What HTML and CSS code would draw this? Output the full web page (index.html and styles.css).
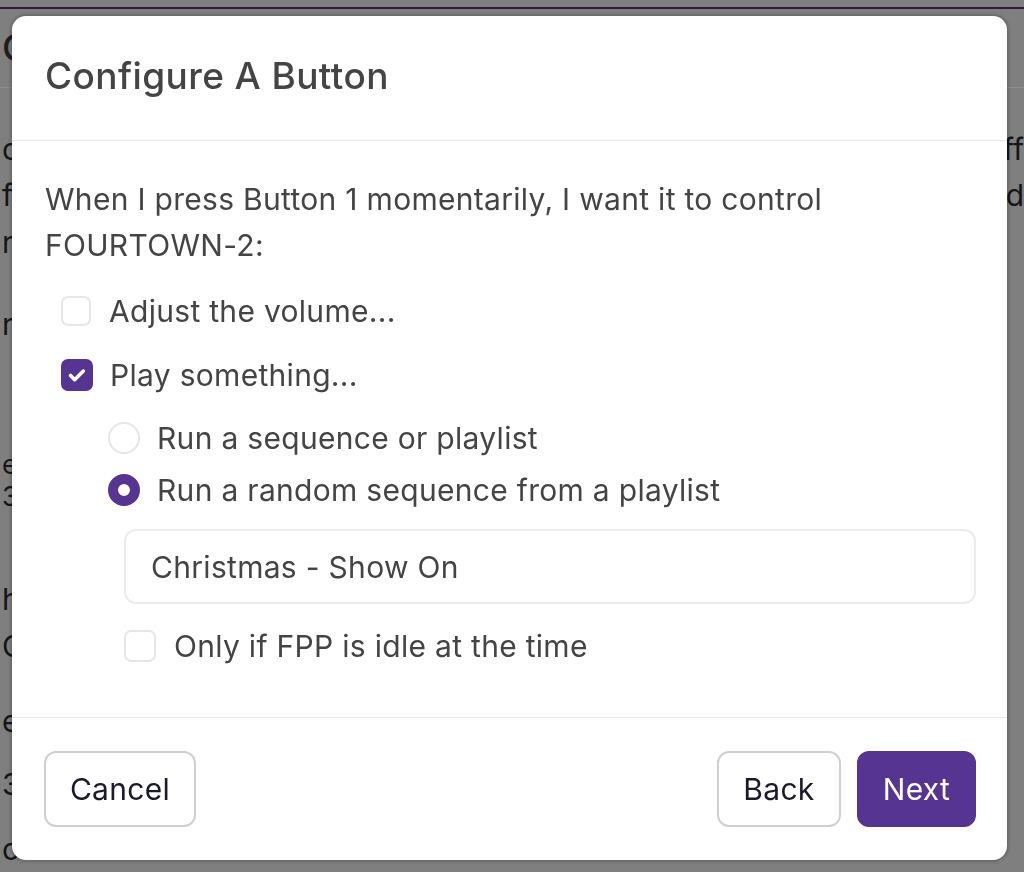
FILE: index.html
```html
<!DOCTYPE html>
<html lang="en">
<head>
<meta charset="utf-8">
<title>Configure A Button</title>
<link rel="stylesheet" href="styles.css">
</head>
<body>
<div class="page" aria-hidden="true">
  <div class="page-top"></div>
  <div class="page-header"><span class="page-title">C</span></div>
  <div class="page-body">
    <div class="bl bl1"><span>c</span><span class="r">ff</span></div>
    <div class="bl bl2"><span>f</span><span class="r">d</span></div>
    <div class="bl bl3"><span>n</span></div>
    <div class="bl bl4"><span>n</span></div>
    <div class="bl bl5"><span>e</span></div>
    <div class="bl bl6"><span>3</span></div>
    <div class="bl bl7"><span>h</span></div>
    <div class="bl bl8"><span>C</span></div>
    <div class="bl bl9"><span>e</span></div>
    <div class="bl bl10"><span>3</span></div>
    <div class="bl bl11"><span>o</span></div>
  </div>
</div>

<div class="modal">
  <div class="modal-header">
    <h1 class="modal-title">Configure A Button</h1>
  </div>
  <div class="modal-body">
    <p class="intro">When I press Button 1 momentarily, I want it to control FOURTOWN-2:</p>
    <label class="check-row row-volume">
      <span class="box"></span>
      <span class="label">Adjust the volume...</span>
    </label>
    <label class="check-row row-play">
      <span class="box box-on">
        <svg viewBox="0 0 32 32" width="32" height="32"><path d="M9.5 16.5l4.2 4.2 8.6-8.6" fill="none" stroke="#fff" stroke-width="3.6" stroke-linecap="round" stroke-linejoin="round"/></svg>
      </span>
      <span class="label">Play something...</span>
    </label>
    <div class="sub">
      <label class="radio-row row-r1">
        <span class="radio"></span>
        <span class="label">Run a sequence or playlist</span>
      </label>
      <label class="radio-row row-r2">
        <span class="radio radio-on"></span>
        <span class="label">Run a random sequence from a playlist</span>
      </label>
      <div class="subsub">
        <div class="select">Christmas - Show On</div>
        <label class="check-row row-idle">
          <span class="box box-lg"></span>
          <span class="label">Only if FPP is idle at the time</span>
        </label>
      </div>
    </div>
  </div>
  <div class="modal-footer">
    <button class="btn btn-light btn-cancel">Cancel</button>
    <div class="right">
      <button class="btn btn-light btn-back">Back</button>
      <button class="btn btn-primary">Next</button>
    </div>
  </div>
</div>
</body>
</html>
```

FILE: styles.css
```css
* { box-sizing: border-box; }

html, body {
  margin: 0;
  padding: 0;
  width: 1024px;
  height: 872px;
  overflow: hidden;
}

body {
  background: #7f7f7f;
  font-family: Inter, "Noto Sans", sans-serif;
  color: #444;
}

/* background page (dimmed) */
.page {
  display: flex;
  flex-direction: column;
  width: 1024px;
  height: 872px;
  overflow: hidden;
}
.page-top {
  height: 9px;
  border-bottom: 2px solid #2b1b48;
}
.page-header {
  height: 80px;
  border-bottom: 1px solid #8e8e8e;
  display: flex;
  align-items: center;
  padding-left: 2px;
}
.page-title {
  font-size: 37px;
  font-weight: 500;
  color: #1e1e1e;
  white-space: nowrap;
}
.page-body {
  display: flex;
  flex-direction: column;
}
.bl {
  height: 46px;
  display: flex;
  align-items: center;
  justify-content: space-between;
  padding-left: 2px;
  font-size: 30px;
  color: #161616;
  white-space: nowrap;
}
.bl1 { margin-top: 38px; }
.bl2 { margin-top: 0; }
.bl3 { margin-top: 1px; }
.bl4 { margin-top: 36px; }
.bl5 { margin-top: 101px; height: 32px; font-size: 27px; }
.bl6 { margin-top: 0; height: 32px; font-size: 27px; }
.bl7 { margin-top: 64px; }
.bl8 { margin-top: 1px; }
.bl9 { margin-top: 29px; }
.bl10 { margin-top: 17px; }
.bl11 { margin-top: 19px; }

/* modal */
.modal {
  position: fixed;
  top: 16px;
  left: 12px;
  width: 995px;
  height: 844px;
  background: #fff;
  border-radius: 14px;
  box-shadow: 0 0 3px 2px rgba(0, 0, 0, 0.18);
  display: flex;
  flex-direction: column;
}

.modal-header {
  height: 125px;
  border-bottom: 1px solid #e9e9e9;
  display: flex;
  align-items: center;
  padding: 0 33px 0 33px;
}
.modal-title {
  margin: 0;
  font-size: 37px;
  font-weight: 500;
  color: #444;
  letter-spacing: 0.4px;
  padding-bottom: 6px;
}

.modal-body {
  flex: 1;
  padding: 35px 31px 0 33px;
  display: flex;
  flex-direction: column;
}

.intro {
  margin: 0;
  font-size: 30px;
  letter-spacing: 0.3px;
  line-height: 46px;
  color: #444;
}

.label {
  font-size: 30px;
  letter-spacing: 0.3px;
  color: #444;
  white-space: nowrap;
}

.check-row, .radio-row {
  display: flex;
  align-items: center;
  height: 46px;
}

.row-volume { margin-top: 20px; padding-left: 16px; }
.row-play { margin-top: 18px; padding-left: 16px; }

.box {
  width: 30px;
  height: 30px;
  border: 2px solid #e6e6e6;
  border-radius: 7px;
  margin-right: 18px;
  flex: none;
  display: flex;
  align-items: center;
  justify-content: center;
}
.box-on {
  width: 32px;
  height: 32px;
  background: #563492;
  border-color: #563492;
  margin-right: 17px;
}
.box-on svg { display: block; flex: none; }
.box-lg {
  width: 32px;
  height: 32px;
}

.sub {
  display: flex;
  flex-direction: column;
  padding-left: 63px;
}
.row-r1 { margin-top: 17px; }
.row-r2 { margin-top: 6px; }

.radio {
  width: 32px;
  height: 32px;
  border-radius: 50%;
  border: 2px solid #e6e6e6;
  margin-right: 17px;
  flex: none;
}
.radio-on {
  border: 10px solid #563492;
  background: #fff;
}

.subsub {
  display: flex;
  flex-direction: column;
  padding-left: 16px;
}
.select {
  margin-top: 16px;
  height: 75px;
  border: 2px solid #ececec;
  border-radius: 12px;
  display: flex;
  align-items: center;
  padding-left: 25px;
  font-size: 30px;
  letter-spacing: 0.3px;
  color: #444;
}
.row-idle { margin-top: 19px; }

.modal-footer {
  height: 143px;
  border-top: 1px solid #e9e9e9;
  display: flex;
  align-items: center;
  justify-content: space-between;
  padding: 0 31px 0 32px;
}
.right {
  display: flex;
  gap: 16px;
}
.btn {
  height: 76px;
  border-radius: 12px;
  font-family: Inter, "Noto Sans", sans-serif;
  font-size: 30px;
  letter-spacing: 0.3px;
  padding: 0;
  cursor: pointer;
}
.btn-light {
  background: #fff;
  border: 2px solid #d0d0d0;
  color: #1b1a29;
}
.btn-cancel { width: 152px; }
.btn-back { width: 124px; }
.btn-primary {
  width: 119px;
  background: #563492;
  border: 2px solid #563492;
  color: #fff;
}
```
